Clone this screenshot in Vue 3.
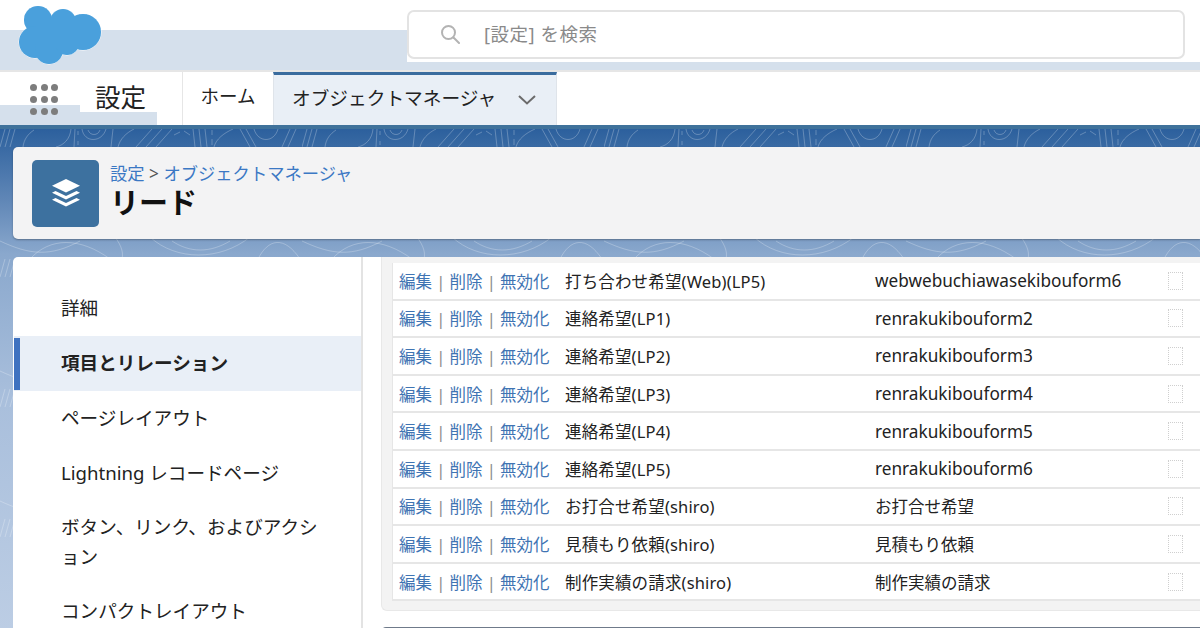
<script setup>
const sideItems = [
  { label: '詳細' },
  { label: '項目とリレーション', active: true },
  { label: 'ページレイアウト' },
  { label: 'Lightning レコードページ' },
  { label: 'ボタン、リンク、およびアクション', wrap: true },
  { label: 'コンパクトレイアウト' },
]

const rows = [
  ['打ち合わせ希望(Web)(LP5)', 'webwebuchiawasekibouform6'],
  ['連絡希望(LP1)', 'renrakukibouform2'],
  ['連絡希望(LP2)', 'renrakukibouform3'],
  ['連絡希望(LP3)', 'renrakukibouform4'],
  ['連絡希望(LP4)', 'renrakukibouform5'],
  ['連絡希望(LP5)', 'renrakukibouform6'],
  ['お打合せ希望(shiro)', 'お打合せ希望'],
  ['見積もり依頼(shiro)', '見積もり依頼'],
  ['制作実績の請求(shiro)', '制作実績の請求'],
]

const dots = [0, 1, 2, 3, 4, 5, 6, 7, 8]

const isLatin = (text) => /^[a-z]/.test(text)
</script>

<template>
  <div class="page">
    <header class="top">
      <svg class="logo" viewBox="0 0 84 60" width="84" height="60">
        <g fill="#4aa0dc" stroke="#fff" stroke-width="1">
          <circle cx="20" cy="15" r="14" />
          <circle cx="45" cy="17" r="13" />
          <circle cx="65" cy="27" r="18" />
          <circle cx="17" cy="37" r="16" />
          <circle cx="31" cy="45" r="14" />
          <circle cx="49" cy="38" r="12" />
        </g>
        <g fill="#4aa0dc">
          <circle cx="20" cy="15" r="14" />
          <circle cx="45" cy="17" r="13" />
          <circle cx="65" cy="27" r="18" />
          <circle cx="17" cy="37" r="16" />
          <circle cx="31" cy="45" r="14" />
          <circle cx="49" cy="38" r="12" />
          <rect x="18" y="15" width="45" height="28" />
        </g>
      </svg>
      <div class="search">
        <svg class="search-icon" viewBox="0 0 20 20" width="20" height="20" fill="none" stroke="#b3b3b3" stroke-width="2">
          <circle cx="8.5" cy="8.5" r="6.5" />
          <path d="M13.5 13.5 L19 19" stroke-linecap="round" />
        </svg>
        <span>[設定] を検索</span>
      </div>
    </header>

    <nav class="nav">
      <div class="app">
        <div class="grid">
          <i v-for="d in dots" :key="d"></i>
        </div>
        <span class="app-name">設定</span>
      </div>
      <div class="tab home">ホーム</div>
      <div class="tab current">
        <span>オブジェクトマネージャ</span>
        <svg viewBox="0 0 18 10" width="18" height="10" fill="none" stroke="#6b6b6b" stroke-width="2">
          <path d="M1 1 L9 8.5 L17 1" />
        </svg>
      </div>
    </nav>

    <main class="stage">
      <svg class="topo" width="1200" height="500">
        <defs>
          <pattern id="topo" width="302" height="130" patternUnits="userSpaceOnUse">
            <g fill="none" stroke="#fff" stroke-opacity=".25" stroke-width="1">
              <!-- upper band -->
              <path d="M0 18 L5 0 M5 18 L10 0 M10 18 L15 0" />
              <path d="M23 18 C24 10 28 5 34 1" />
              <path d="M56 18 C64 16 70 10 71 0" />
              <path d="M74 18 L75 0 M78 16 L78 12 M78 6 L78 2" />
              <path d="M82 0 C84 14 102 14 106 0" />
              <path d="M88 1 C90 7 98 7 100 1" />
              <path d="M111 18 L113 0" />
              <path d="M118 18 C120 10 126 4 134 0" />
              <path d="M136 18 L152 0 M146 18 L162 0 M156 18 L172 0" />
              <path d="M174 6 L180 3 M184 2 L190 6" />
              <path d="M195 18 L193 0 M201 18 L199 0 M207 18 L205 0 M212 6 L212 1 M212 16 L212 10" />
              <path d="M214 18 C216 10 224 4 233 0" />
              <path d="M240 0 L250 18 M246 0 L256 18 M254 0 C258 14 274 14 278 0" />
              <path d="M282 18 L290 0 M288 18 L296 0" />
              <!-- lower band -->
              <path d="M0 112 C30 126 50 128 80 112" />
              <path d="M30 130 C50 108 80 108 110 130" />
              <path d="M150 108 C176 132 220 132 250 108" />
              <path d="M172 112 C190 124 210 124 230 112" />
              <path d="M258 130 C268 110 284 106 300 130" />
              <path d="M112 104 C120 114 124 122 122 130" />
            </g>
          </pattern>
        </defs>
        <rect width="1200" height="500" fill="url(#topo)" />
      </svg>

      <section class="title-card">
        <div class="obj-icon">
          <svg viewBox="0 0 28 27.4" width="28" height="27.4" fill="#fff">
            <path d="M14 0 L28 6.7 L14 13.4 L0 6.7 Z" />
            <path d="M3.5 12 L14 17 L24.5 12 L28 13.7 L14 20.4 L0 13.7 Z" />
            <path d="M3.5 19 L14 24 L24.5 19 L28 20.7 L14 27.4 L0 20.7 Z" />
          </svg>
        </div>
        <div class="title-text">
          <div class="crumb"><a>設定</a> <b>&gt;</b> <a>オブジェクトマネージャ</a></div>
          <h1>リード</h1>
        </div>
      </section>

      <section class="panel">
        <aside class="side">
          <div
            v-for="item in sideItems"
            :key="item.label"
            class="side-item"
            :class="{ active: item.active, wrap: item.wrap }"
          >{{ item.label }}</div>
        </aside>
        <div class="content">
          <div class="fields">
            <div v-for="row in rows" :key="row[1]" class="row">
              <div class="acts"><a>編集</a><s>|</s><a>削除</a><s>|</s><a>無効化</a></div>
              <div class="name">{{ row[0] }}</div>
              <div class="api" :class="{ latin: isLatin(row[1]) }">{{ row[1] }}</div>
              <div class="check"></div>
            </div>
          </div>
          <div class="next"></div>
        </div>
      </section>
    </main>
  </div>
</template>

<style>
html, body {
  margin: 0;
  overflow: hidden;
  background: #fff;
}
</style>

<style scoped>
.page {
  width: 1200px;
  height: 628px;
  overflow: hidden;
  display: flex;
  flex-direction: column;
  font-family: "Noto Sans", "Noto Sans CJK JP", sans-serif;
  color: #222;
}
.top {
  height: 70px;
  flex: none;
  box-sizing: border-box;
  display: flex;
  align-items: flex-start;
  padding: 10px 15px 0 18px;
  background:
    linear-gradient(#d5e0ec, #d5e0ec) 0 30px / 407px 40px no-repeat,
    linear-gradient(#d5e0ec, #d5e0ec) 0 62px / 100% 8px no-repeat,
    #fff;
}
.logo {
  margin-top: -5px;
  flex: none;
}
.search {
  margin-left: auto;
  width: 778px;
  height: 49px;
  box-sizing: border-box;
  background: #fff;
  border: 2px solid #e3e3e3;
  border-radius: 7px;
  display: flex;
  align-items: center;
  padding-left: 31px;
  gap: 24px;
  font-size: 18.5px;
  letter-spacing: .5px;
  color: #8a8a8a;
}
.search span {
  margin-top: -3px;
}
.search-icon {
  flex: none;
  margin-top: -2px;
}
.nav {
  height: 55px;
  flex: none;
  box-sizing: border-box;
  border-top: 2px solid #e6e6e6;
  display: flex;
  background: #fff;
}
.app {
  width: 182px;
  flex: none;
  box-sizing: border-box;
  padding-left: 30px;
  display: flex;
  align-items: center;
  gap: 37px;
  background:
    linear-gradient(#d5e0ec, #d5e0ec) 0 33px / 80px 20px no-repeat,
    linear-gradient(#d5e0ec, #d5e0ec) 0 40px / 157px 13px no-repeat;
}
.grid {
  display: grid;
  grid-template-columns: repeat(3, 7px);
  gap: 5px 3.5px;
  margin-top: 1px;
}
.grid i {
  width: 7px;
  height: 7px;
  border-radius: 50%;
  background: #7d7d7d;
}
.app-name {
  font-size: 25.5px;
  color: #222;
  margin-top: -7px;
}
.tab {
  display: flex;
  align-items: center;
  font-size: 18.5px;
  box-sizing: border-box;
}
.home {
  width: 91px;
  justify-content: center;
  border-left: 1px solid #e6e6e6;
  padding-bottom: 7px;
}
.current {
  width: 284px;
  background: #e9eff6;
  border-top: 3px solid #3a6c9e;
  border-left: 1px solid #dfe4ea;
  border-right: 1px solid #dfe4ea;
  padding: 0 0 8px 18px;
  gap: 22px;
  font-size: 18.7px;
}
.current svg {
  margin-top: 8px;
}
.stage {
  position: relative;
  flex: 1;
  min-height: 0;
  border-top: 4px solid #3f729b;
  padding: 18px 0 0 13px;
  background: linear-gradient(#2c609d 0, #5f86b6 70px, #8aa8cd 125px, #a9bfdc 270px, #bccde4 500px);
}
.topo {
  position: absolute;
  left: 0;
  top: 0;
}
.title-card {
  position: relative;
  height: 92px;
  box-sizing: border-box;
  background: #f3f3f4;
  border-radius: 5px 0 0 5px;
  box-shadow: 0 1px 2px rgba(0, 0, 0, .3);
  display: flex;
  align-items: center;
  padding-left: 19px;
  gap: 11px;
}
.obj-icon {
  width: 67px;
  height: 67px;
  border-radius: 5px;
  background: #3d719f;
  display: flex;
  align-items: center;
  justify-content: center;
}
.title-text {
  margin-top: -3px;
}
.crumb {
  font-size: 17.3px;
  line-height: 20px;
  color: #3b78c4;
}
.crumb b {
  font-weight: 400;
  color: #555;
}
h1 {
  margin: 2px 0 0;
  font-size: 29px;
  line-height: 34px;
  font-weight: 700;
  color: #111;
}
.panel {
  position: relative;
  margin-top: 18px;
  height: 400px;
  background: #fff;
  border-radius: 5px 0 0 0;
  display: flex;
}
.side {
  width: 350px;
  flex: none;
  box-sizing: border-box;
  padding-top: 24px;
  border-right: 2px solid #e3e3e3;
  font-size: 18.6px;
}
.side-item {
  height: 55px;
  box-sizing: border-box;
  padding: 0 20px 1px 48px;
  display: flex;
  align-items: center;
  line-height: 30px;
}
.side-item.wrap {
  height: 83px;
  padding-right: 26px;
}
.side-item.active {
  margin-left: 1px;
  padding-left: 47px;
  font-weight: 700;
  background:
    linear-gradient(#3f72c0, #3f72c0) 0 2px / 6px 52px no-repeat,
    #e9eff7;
}
.content {
  flex: 1;
  min-width: 0;
  padding-left: 18px;
}
.fields {
  background: #f3f3f3;
  border: 1px solid #e8e8e8;
  border-right: 0;
  border-top: 0;
  border-radius: 0 0 0 6px;
  padding: 6px 0 9px 10px;
}
.row {
  height: 37.6px;
  box-sizing: border-box;
  background: #fff;
  border-bottom: 2px solid #e6e6e6;
  border-left: 1px solid #e6e6e6;
  display: flex;
  align-items: center;
  font-size: 16.5px;
  padding-left: 6px;
}
.acts {
  width: 166px;
  flex: none;
  white-space: nowrap;
}
.acts a {
  color: #3f74b3;
}
.acts s {
  display: inline-block;
  width: 17.5px;
  text-align: center;
  text-decoration: none;
  color: #8a8a8a;
}
.name {
  width: 310px;
  flex: none;
  white-space: nowrap;
  letter-spacing: .15px;
}
.api {
  width: 293px;
  flex: none;
  white-space: nowrap;
}
.api.latin {
  font-size: 17.2px;
}
.check {
  width: 13px;
  height: 16px;
  border: 1px dotted #cfcfcf;
}
.next {
  margin-top: 16px;
  height: 20px;
  border-top: 2px solid #6f7a8a;
  border-radius: 5px 0 0 0;
}
</style>
